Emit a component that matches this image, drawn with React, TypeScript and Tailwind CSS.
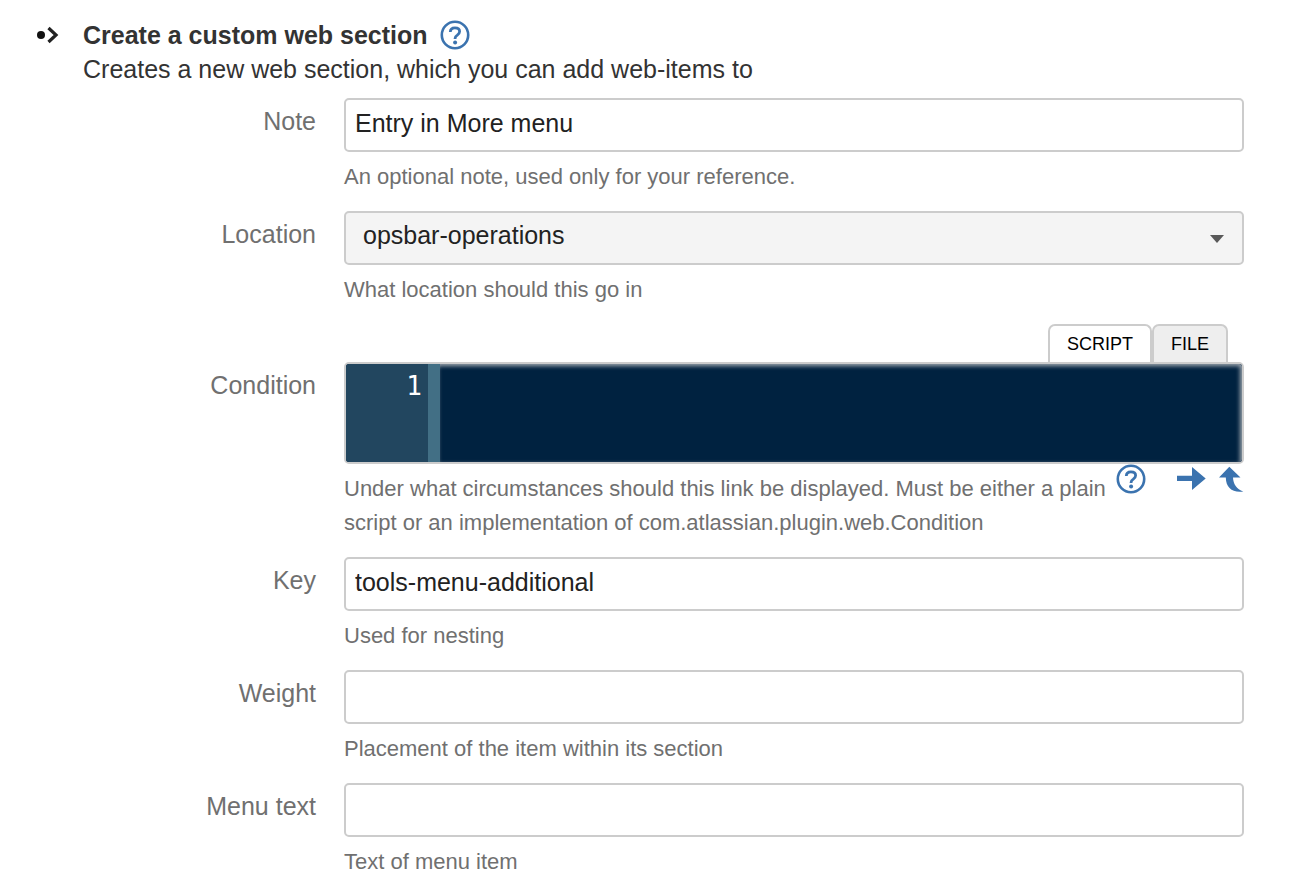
import { useState } from "react";
import type { ReactNode } from "react";

const inputClass =
  "block h-[54px] w-full rounded-[5px] border-2 border-[#cccccc] bg-white px-[9px] pb-1 text-[25px] text-[#222222] outline-none focus:border-[#3b73af]";

function HelpIcon() {
  return (
    <svg width="30" height="30" viewBox="0 0 30 30" fill="none" className="block">
      <circle cx="15" cy="15" r="13.2" stroke="#3b73af" strokeWidth="2.6" />
      <path
        d="M10.3 12c.1-2.800 1.900-4.200 4.600-4.200 2.800 0 4.700 1.400 4.700 3.700 0 1.700-.9 2.600-2.300 3.600-1.500 1-2.200 1.700-2.200 3.200v.8"
        stroke="#3b73af"
        strokeWidth="2.8"
      />
      <circle cx="15.1" cy="22.5" r="2" fill="#3b73af" />
    </svg>
  );
}

function FieldRow({ id, label, children }: { id: string; label: string; children: ReactNode }) {
  return (
    <div className="flex gap-7">
      <label htmlFor={id} className="h-12 w-[316px] shrink-0 text-right text-[25px] leading-[46px] text-[#707070]">
        {label}
      </label>
      <div className="min-w-0 flex-1">{children}</div>
    </div>
  );
}

function HelpText({ id, children }: { id: string; children: ReactNode }) {
  return (
    <p id={id} className="mt-2 text-[22px] leading-[34px] text-[#707070]">
      {children}
    </p>
  );
}

function TextField({ id, label, help, initial = "" }: { id: string; label: string; help: string; initial?: string }) {
  const [value, setValue] = useState(initial);

  return (
    <FieldRow id={id} label={label}>
      <input
        id={id}
        type="text"
        className={inputClass}
        value={value}
        onChange={(e) => setValue(e.target.value)}
        aria-describedby={`${id}-help`}
      />
      <HelpText id={`${id}-help`}>{help}</HelpText>
    </FieldRow>
  );
}

function LocationField() {
  return (
    <FieldRow id="location" label="Location">
      <div className="relative">
        <select
          id="location"
          className="block h-[54px] w-full appearance-none rounded-[5px] border-2 border-[#cccccc] bg-[#f4f4f4] pr-12 pb-1 pl-[17px] text-[25px] text-[#222222] outline-none focus:border-[#3b73af]"
          aria-describedby="location-help"
        >
          <option>opsbar-operations</option>
        </select>
        <svg width="14" height="8" viewBox="0 0 14 8" className="pointer-events-none absolute top-6 right-5">
          <path d="M0 0h14L7 8z" fill="#595959" />
        </svg>
      </div>
      <HelpText id="location-help">What location should this go in</HelpText>
    </FieldRow>
  );
}

function ConditionField() {
  const [mode, setMode] = useState("script");
  const tabClass = "h-[38px] rounded-t-[7px] border-2 border-b-0 border-[#cccccc] px-[17px] text-[18px] text-black";

  return (
    <div>
      <div className="mr-[70px] flex justify-end" role="tablist">
        <button
          type="button"
          role="tab"
          aria-selected={mode === "script"}
          className={`${tabClass} ${mode === "script" ? "bg-white" : "bg-[#eeeeee]"}`}
          onClick={() => setMode("script")}
        >
          SCRIPT
        </button>
        <button
          type="button"
          role="tab"
          aria-selected={mode === "file"}
          className={`${tabClass} ${mode === "file" ? "bg-white" : "bg-[#eeeeee]"}`}
          onClick={() => setMode("file")}
        >
          FILE
        </button>
      </div>
      <div className="pr-[54px]">
        <FieldRow id="condition" label="Condition">
          <div className="flex h-[102px] overflow-hidden rounded-[5px] border-2 border-[#cccccc] bg-[#002240]">
            <div className="w-[94px] shrink-0 border-r-12 border-[#426f85] bg-[#22465f] pt-1 pr-[6px] text-right font-['DejaVu_Sans_Mono',monospace] text-[26px] leading-9 text-white">
              1
            </div>
            <textarea
              id="condition"
              spellCheck={false}
              className="block min-w-0 flex-1 resize-none bg-[#002240] px-2 pt-1 font-['DejaVu_Sans_Mono',monospace] text-[26px] leading-9 text-white shadow-[inset_-2px_2px_4px_#a0a8b0] outline-none"
              aria-describedby="condition-help"
            />
          </div>
          <div className="flex items-start">
            <div className="min-w-0 flex-1">
              <HelpText id="condition-help">
                Under what circumstances should this link be displayed. Must be either a plain script or an
                implementation of com.atlassian.plugin.web.Condition
              </HelpText>
            </div>
            <div className="flex shrink-0">
              <button type="button" aria-label="Condition help">
                <HelpIcon />
              </button>
              <button type="button" aria-label="Expand editor" className="ml-[30px]">
                <svg width="30" height="30" viewBox="0 0 30 30" fill="#3b73af" className="block">
                  <path d="M1 11.700h15V3l13.700 11.500L16 26v-9H1z" />
                </svg>
              </button>
              <button type="button" aria-label="Reset editor" className="ml-3">
                <svg width="26" height="30" viewBox="0 0 26 30" fill="#3b73af" className="block">
                  <path d="M11.300 2.800 22.500 13.500H15c.2 6.500 3.600 11.500 10.300 14C14.500 29 8 24 7.800 13.500H1z" />
                </svg>
              </button>
            </div>
          </div>
        </FieldRow>
      </div>
    </div>
  );
}

export default function App() {
  return (
    <main className="bg-white pt-[18px] font-['Liberation_Sans',Arial,sans-serif] text-[#333333]">
      <header className="flex pl-9">
        <svg width="24" height="34" viewBox="0 0 24 34" className="mr-[23px] shrink-0" aria-hidden="true">
          <circle cx="5" cy="17" r="4" fill="#111111" />
          <path d="m12.500 10 7.500 7-7.500 7" fill="none" stroke="#222222" strokeWidth="3.200" />
        </svg>
        <div>
          <div className="flex items-center gap-3">
            <h1 className="text-[25px] leading-[34px] font-bold">Create a custom web section</h1>
            <button type="button" aria-label="Web section help">
              <HelpIcon />
            </button>
          </div>
          <p className="text-[25px] leading-[34px]">Creates a new web section, which you can add web-items to</p>
        </div>
      </header>

      <form className="mt-3 flex flex-col gap-[17px]" onSubmit={(e) => e.preventDefault()}>
        <div className="flex flex-col gap-[17px] pr-[54px]">
          <TextField
            id="note"
            label="Note"
            initial="Entry in More menu"
            help="An optional note, used only for your reference."
          />
          <LocationField />
        </div>
        <ConditionField />
        <div className="flex flex-col gap-[17px] pr-[54px]">
          <TextField id="key" label="Key" initial="tools-menu-additional" help="Used for nesting" />
          <TextField id="weight" label="Weight" help="Placement of the item within its section" />
          <TextField id="menu-text" label="Menu text" help="Text of menu item" />
        </div>
      </form>
    </main>
  );
}
